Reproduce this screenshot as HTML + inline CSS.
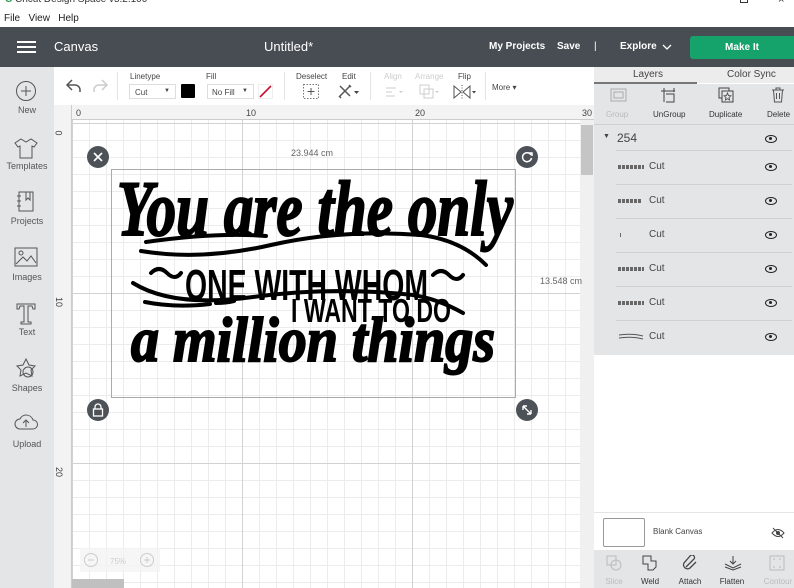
<!DOCTYPE html>
<html><head><meta charset="utf-8"><style>
*{box-sizing:border-box;margin:0;padding:0}
body{width:794px;height:588px;overflow:hidden;font-family:"Liberation Sans",sans-serif;background:#fff;position:relative;color:#333}
.a{position:absolute}
.side div{position:absolute;left:0;width:54px;text-align:center;font-size:9px;color:#555}
.tl{font-size:8px;color:#444}
.lab{font-size:9px;color:#444}
.row{position:absolute;left:616px;width:176px;height:34px;border-top:1px solid #cfd0d2}
.row .t{position:absolute;left:33px;top:10px;font-size:10px;color:#444}
.row .th{position:absolute;left:2px;top:14px;width:26px;height:4px;background:repeating-linear-gradient(90deg,#333 0 3px,transparent 3px 4px);opacity:.7}
.eye{position:absolute;width:12px;height:8px;border:1.5px solid #222;border-radius:50%/50%}
.eye:after{content:"";position:absolute;left:3px;top:1px;width:3px;height:3px;background:#222;border-radius:50%}
.bt{position:absolute;top:577px;font-size:8px;color:#333;width:40px;text-align:center}
</style></head><body>
<div class="a" style="left:0;top:0;width:794px;height:10px;background:#fff;overflow:hidden">
<div class="a" style="left:5px;top:-6px;font-size:10px;color:#333"><span style="color:#2c9c4c;font-weight:bold">C</span> Cricut Design Space v5.2.100</div>
<div class="a" style="left:740px;top:-4px;width:8px;height:7px;border:1px solid #333"></div>
<div class="a" style="left:778px;top:-6px;font-size:11px">×</div>
</div>
<div class="a" style="left:4px;top:13px;font-size:10px;color:#222">File&nbsp;&nbsp; View&nbsp;&nbsp; Help</div>
<div class="a" style="left:0;top:27px;width:794px;height:40px;background:#474d53"></div>
<div class="a" style="left:17px;top:41px;width:19px;height:2px;background:#fff;box-shadow:0 5px 0 #fff,0 10px 0 #fff"></div>
<div class="a" style="left:54px;top:39px;font-size:13px;color:#fff">Canvas</div>
<div class="a" style="left:264px;top:39px;font-size:13px;color:#fff">Untitled*</div>
<div class="a" style="left:489px;top:41px;font-size:10px;color:#fff;font-weight:bold">My Projects</div>
<div class="a" style="left:557px;top:41px;font-size:10px;color:#fff;font-weight:bold">Save</div>
<div class="a" style="left:594px;top:41px;font-size:10px;color:#fff">|</div>
<div class="a" style="left:620px;top:41px;font-size:10px;color:#fff;font-weight:bold">Explore</div>
<svg class="a" style="left:662px;top:44px" width="10" height="6"><path d="M1 1l4 4 4-4" stroke="#fff" fill="none" stroke-width="1.3"/></svg>
<div class="a" style="left:690px;top:36px;width:104px;height:23px;background:#15a26b;border-radius:3px 0 0 3px;color:#fff;font-size:10px;font-weight:bold;text-align:center;line-height:23px">Make It</div>
<div class="a side" style="left:0;top:67px;width:54px;height:521px;background:#e4e5e7">
<svg class="a" style="left:15px;top:13px" width="22" height="22"><circle cx="11" cy="11" r="9.5" stroke="#555" fill="none"/><path d="M11 6v10M6 11h10" stroke="#555"/></svg>
<div style="top:38px">New</div>
<svg class="a" style="left:13px;top:70px" width="26" height="22"><path d="M8 2l5 3 5-3 6 4-3 4-2-1v12H7V9l-2 1-3-4z" stroke="#555" fill="none"/></svg>
<div style="top:94px">Templates</div>
<svg class="a" style="left:16px;top:124px" width="20" height="22"><rect x="3" y="1" width="14" height="19" stroke="#555" fill="none"/><path d="M10 1v8l2-2 2 2V1M1 5h4M1 10h4M1 15h4" stroke="#555" fill="none"/></svg>
<div style="top:149px">Projects</div>
<svg class="a" style="left:14px;top:180px" width="24" height="20"><rect x="1" y="1" width="22" height="18" stroke="#555" fill="none"/><circle cx="7" cy="6" r="2" stroke="#555" fill="none"/><path d="M2 17l7-7 4 4 4-5 5 7" stroke="#555" fill="none"/></svg>
<div style="top:205px">Images</div>
<svg class="a" style="left:16px;top:236px" width="20" height="22"><path d="M1 1h18v5h-2l-1-3h-4v16h3v2H5v-2h3V3H4L3 6H1z" stroke="#555" fill="none"/></svg>
<div style="top:260px">Text</div>
<svg class="a" style="left:15px;top:291px" width="22" height="22"><path d="M11 1l3 6 6 1-4 4 1 6-6-3-6 3 1-6-4-4 6-1z" stroke="#555" fill="none"/><circle cx="13" cy="14" r="5" stroke="#555" fill="none"/></svg>
<div style="top:316px">Shapes</div>
<svg class="a" style="left:14px;top:346px" width="24" height="18"><path d="M6 16a5 5 0 010-10 7 7 0 0113 1 4.5 4.5 0 010 9z" stroke="#555" fill="none"/><path d="M12 14V8M9 10l3-3 3 3" stroke="#555" fill="none"/></svg>
<div style="top:372px">Upload</div>
</div>
<div class="a" style="left:54px;top:67px;width:540px;height:38px;background:#fff"></div>
<svg class="a" style="left:64px;top:77px" width="46" height="18"><path d="M8 3L3 8l5 5M3 8h8a5 5 0 015 5v2" stroke="#555" fill="none" stroke-width="1.5"/><path d="M38 3l5 5-5 5M43 8h-8a5 5 0 00-5 5v2" stroke="#ccc" fill="none" stroke-width="1.5"/></svg>
<div class="a" style="left:117px;top:72px;width:1px;height:28px;background:#e4e4e4"></div>
<div class="a tl" style="left:130px;top:72px">Linetype</div>
<div class="a" style="left:129px;top:84px;width:47px;height:15px;border:1px solid #ddd;font-size:8px;color:#444;padding:3px 5px">Cut<span style="position:absolute;right:5px;font-size:6px">▼</span></div>
<div class="a" style="left:181px;top:84px;width:14px;height:14px;background:#000;border-radius:1px"></div>
<div class="a tl" style="left:206px;top:72px">Fill</div>
<div class="a" style="left:207px;top:84px;width:47px;height:15px;border:1px solid #ddd;font-size:8px;color:#444;padding:3px 4px">No Fill<span style="position:absolute;right:5px;font-size:6px">▼</span></div>
<svg class="a" style="left:258px;top:84px" width="15" height="15"><rect x=".5" y=".5" width="14" height="14" fill="none" stroke="#eee"/><path d="M2 13L13 2" stroke="#c8102e" stroke-width="1.6"/></svg>
<div class="a" style="left:284px;top:72px;width:1px;height:28px;background:#e4e4e4"></div>
<div class="a tl" style="left:296px;top:72px">Deselect</div>
<svg class="a" style="left:303px;top:84px" width="16" height="15"><rect x=".5" y=".5" width="15" height="14" fill="none" stroke="#777" stroke-dasharray="1.5 1.5"/><path d="M8 4v7M4.5 7.5h7" stroke="#555"/></svg>
<div class="a tl" style="left:342px;top:72px">Edit</div>
<svg class="a" style="left:338px;top:84px" width="22" height="15"><path d="M2 2l10 10M12 2L2 12M1 12l2 2M11 1l2 2" stroke="#555" fill="none" stroke-width="1.5"/><path d="M16 7h5l-2.5 3z" fill="#444"/></svg>
<div class="a" style="left:370px;top:72px;width:1px;height:28px;background:#e4e4e4"></div>
<div class="a tl" style="left:384px;top:72px;color:#ccc">Align</div>
<svg class="a" style="left:385px;top:86px" width="20" height="12"><path d="M1 2h10M1 6h6M1 10h9" stroke="#ccc"/><path d="M14 5h4l-2 2z" fill="#ccc"/></svg>
<div class="a tl" style="left:415px;top:72px;color:#ccc">Arrange</div>
<svg class="a" style="left:419px;top:84px" width="22" height="16"><rect x="1" y="1" width="9" height="9" fill="none" stroke="#ccc"/><rect x="5" y="5" width="9" height="9" fill="none" stroke="#ccc"/><path d="M16 7h4l-2 2z" fill="#ccc"/></svg>
<div class="a tl" style="left:458px;top:72px">Flip</div>
<svg class="a" style="left:453px;top:85px" width="24" height="14"><path d="M1 1l7 6-7 6zM17 1l-7 6 7 6z" fill="none" stroke="#555"/><path d="M9 0v14" stroke="#555" stroke-dasharray="1 1.5"/><path d="M19 6h4l-2 2.5z" fill="#444"/></svg>
<div class="a" style="left:485px;top:72px;width:1px;height:28px;background:#e4e4e4"></div>
<div class="a tl" style="left:492px;top:83px">More ▾</div>
<div class="a" style="left:54px;top:105px;width:540px;height:15px;background:#f3f3f4;border-bottom:1px solid #ccc"></div>
<div class="a" style="left:54px;top:105px;width:18px;height:483px;background:#f3f3f4;border-right:1px solid #ccc"></div>
<div class="a lab" style="left:76px;top:108px">0</div>
<div class="a lab" style="left:246px;top:108px">10</div>
<div class="a lab" style="left:415px;top:108px">20</div>
<div class="a lab" style="left:582px;top:108px">30</div>
<div class="a lab" style="left:56px;top:128px;transform:rotate(90deg)">0</div>
<div class="a lab" style="left:54px;top:297px;transform:rotate(90deg)">10</div>
<div class="a lab" style="left:54px;top:467px;transform:rotate(90deg)">20</div>
<div class="a" style="left:72px;top:120px;width:508px;height:468px;background-color:#fff;
background-image:linear-gradient(90deg,#d2d2d2 1px,transparent 1px),linear-gradient(#d2d2d2 1px,transparent 1px),linear-gradient(90deg,#ececec 1px,transparent 1px),linear-gradient(#ececec 1px,transparent 1px);
background-size:170px 170px,170px 170px,17px 17px,17px 17px;background-position:0 3px,0 3px,0 3px,0 3px"></div>
<div class="a" style="left:580px;top:120px;width:14px;height:468px;background:#f0f0f0"></div>
<div class="a" style="left:581px;top:125px;width:12px;height:50px;background:#c5c5c5"></div>
<div class="a" style="left:72px;top:579px;width:52px;height:9px;background:#c0c0c0"></div>
<div class="a" style="left:80px;top:548px;width:80px;height:24px;background:#f4f4f4;opacity:.8"></div>
<svg class="a" style="left:84px;top:552px" width="72" height="16"><circle cx="7" cy="8" r="6.5" stroke="#ccc" fill="none"/><path d="M4 8h6" stroke="#ccc"/><circle cx="63" cy="8" r="6.5" stroke="#ccc" fill="none"/><path d="M60 8h6M63 5v6" stroke="#ccc"/><text x="26" y="12" font-size="8" fill="#ccc" font-family="Liberation Sans">75%</text></svg>
<div class="a" style="left:111px;top:169px;width:405px;height:229px;border:1.5px solid #aaa"></div>
<div class="a" style="left:291px;top:148px;font-size:9px;color:#666">23.944 cm</div>
<div class="a" style="left:540px;top:276px;font-size:9px;color:#666">13.548 cm</div>
<svg class="a" style="left:87px;top:146px" width="22" height="22"><circle cx="11" cy="11" r="11" fill="#4c5258"/><path d="M7 7l8 8M15 7l-8 8" stroke="#fff" stroke-width="1.6"/></svg>
<svg class="a" style="left:516px;top:146px" width="22" height="22"><circle cx="11" cy="11" r="11" fill="#4c5258"/><path d="M15 9a4.5 4.5 0 10.5 3" stroke="#fff" stroke-width="1.5" fill="none"/><path d="M13 7h3v3" stroke="#fff" stroke-width="1.5" fill="none"/></svg>
<svg class="a" style="left:87px;top:399px" width="22" height="22"><circle cx="11" cy="11" r="11" fill="#4c5258"/><rect x="6.5" y="10" width="9" height="7" fill="none" stroke="#fff" stroke-width="1.3"/><path d="M8 10V8a3 3 0 016 0v2" stroke="#fff" stroke-width="1.3" fill="none"/></svg>
<svg class="a" style="left:516px;top:399px" width="22" height="22"><circle cx="11" cy="11" r="11" fill="#4c5258"/><path d="M7 7l8 8M7 7h4M7 7v4M15 15h-4M15 15v-4" stroke="#fff" stroke-width="1.4" fill="none"/></svg>
<svg class="a" style="left:111px;top:169px" width="405" height="229">
<g font-family="Liberation Serif" font-weight="bold" font-style="italic" fill="#000">
<text x="6" y="66" font-size="78" textLength="396" lengthAdjust="spacingAndGlyphs" stroke="#000" stroke-width="2">You are the only</text>
<text x="74" y="131" font-size="44" font-style="normal" font-family="Liberation Sans" textLength="243" lengthAdjust="spacingAndGlyphs">ONE WITH WHOM</text>
<text x="180" y="153" font-size="33" font-style="normal" font-family="Liberation Sans" textLength="160" lengthAdjust="spacingAndGlyphs">I WANT TO DO</text>
<text x="20" y="192" font-size="64" textLength="364" lengthAdjust="spacingAndGlyphs" stroke="#000" stroke-width="2">a million things</text>
</g>
<g fill="none" stroke="#000" stroke-width="4" stroke-linecap="round">
<path d="M35 73q70-10 120-6"/><path d="M30 82q60 10 130-6t150-10q40 5 65 30"/>
<path d="M40 104q8-8 16 0t14 0"/><path d="M322 106q8-8 16 0t14 0"/>
<path d="M22 114q40 25 120 14t160-2q25 4 50 18"/>
<path d="M34 133q30 6 65 2"/><path d="M105 134q10 0 18-2"/>
</g>
</svg>
<div class="a" style="left:594px;top:67px;width:200px;height:521px;background:#fff"></div>
<div class="a" style="left:594px;top:67px;width:200px;height:16px;background:#ececed"></div>
<div class="a" style="left:633px;top:69px;font-size:10px;color:#444">Layers</div>
<div class="a" style="left:727px;top:69px;font-size:10px;color:#444">Color Sync</div>
<div class="a" style="left:594px;top:82px;width:103px;height:2px;background:#777"></div>
<div class="a" style="left:594px;top:84px;width:200px;height:271px;background:#e4e5e7"></div>
<svg class="a" style="left:610px;top:88px" width="18" height="15"><rect x="1" y="1" width="15" height="12" fill="none" stroke="#aaa"/><rect x="4" y="4" width="9" height="6" fill="none" stroke="#aaa"/></svg>
<svg class="a" style="left:660px;top:87px" width="18" height="16"><path d="M4 1v14M1 4h14M14 1v4M6 7h8v8H6" fill="none" stroke="#444"/></svg>
<svg class="a" style="left:718px;top:87px" width="16" height="16"><rect x="1" y="1" width="10" height="10" fill="none" stroke="#444"/><rect x="4" y="4" width="11" height="11" fill="#e4e5e7" stroke="#444"/><path d="M9.5 6l1 2.5 2.5.3-2 1.7.6 2.5-2.1-1.3-2.1 1.3.6-2.5-2-1.7 2.5-.3z" fill="none" stroke="#444" stroke-width=".8"/></svg>
<svg class="a" style="left:771px;top:87px" width="14" height="16"><path d="M1 3h12M5 3V1h4v2M2.5 3l1 12h7l1-12M5.5 6v6M8.5 6v6" fill="none" stroke="#555"/></svg>
<div class="a" style="left:606px;top:110px;font-size:8px;color:#bbb">Group</div>
<div class="a" style="left:653px;top:110px;font-size:8px;color:#333">UnGroup</div>
<div class="a" style="left:709px;top:110px;font-size:8px;color:#333">Duplicate</div>
<div class="a" style="left:767px;top:110px;font-size:8px;color:#333">Delete</div>
<div class="a" style="left:594px;top:124px;width:200px;height:1px;background:#d0d0d0"></div>
<div class="a" style="left:603px;top:133px;font-size:7px;color:#444">▼</div>
<div class="a" style="left:617px;top:131px;font-size:12px;color:#444">254</div>
<div class="eye" style="left:765px;top:135px"></div>
<div class="row" style="top:150px"><div class="th"></div><div class="t">Cut</div><div class="eye" style="left:149px;top:12px"></div></div>
<div class="row" style="top:184px"><div class="th" style="width:24px"></div><div class="t">Cut</div><div class="eye" style="left:149px;top:12px"></div></div>
<div class="row" style="top:218px"><div class="th" style="width:1px;left:4px"></div><div class="t">Cut</div><div class="eye" style="left:149px;top:12px"></div></div>
<div class="row" style="top:252px"><div class="th"></div><div class="t">Cut</div><div class="eye" style="left:149px;top:12px"></div></div>
<div class="row" style="top:286px"><div class="th"></div><div class="t">Cut</div><div class="eye" style="left:149px;top:12px"></div></div>
<div class="row" style="top:320px"><svg style="position:absolute;left:2px;top:12px" width="26" height="8"><path d="M1 2q12-2 24 1M1 5q12-2 24 1" stroke="#555" fill="none"/></svg><div class="t">Cut</div><div class="eye" style="left:149px;top:12px"></div></div>
<div class="a" style="left:594px;top:512px;width:200px;height:1px;background:#e4e4e4"></div>
<div class="a" style="left:603px;top:518px;width:42px;height:29px;border:1px solid #999;border-radius:2px;background:#fff"></div>
<div class="a" style="left:653px;top:527px;font-size:8px;color:#444">Blank Canvas</div>
<svg class="a" style="left:771px;top:527px" width="14" height="12"><path d="M1 6q6-7 12 0q-6 7-12 0z" fill="none" stroke="#444"/><circle cx="7" cy="6" r="2" fill="#444"/><path d="M2 1l10 10" stroke="#444"/></svg>
<div class="a" style="left:594px;top:550px;width:200px;height:38px;background:#e4e5e7"></div>
<svg class="a" style="left:606px;top:555px" width="16" height="16"><rect x="1" y="1" width="9" height="9" fill="none" stroke="#bbb"/><circle cx="10" cy="10" r="5" fill="none" stroke="#bbb"/></svg>
<svg class="a" style="left:642px;top:555px" width="16" height="16"><path d="M1 1h8v5h5v6l-3 3H6V9H1z" fill="none" stroke="#444"/></svg>
<svg class="a" style="left:682px;top:555px" width="16" height="16"><path d="M4 12L12 4a2.5 2.5 0 00-4-3L2 8a4 4 0 006 5l6-6" fill="none" stroke="#444" stroke-width="1.3"/></svg>
<svg class="a" style="left:724px;top:555px" width="18" height="16"><path d="M1 9l8 4 8-4M9 1v8M6 6l3 3 3-3" fill="none" stroke="#444"/><path d="M1 12l8 3 8-3" fill="none" stroke="#444"/></svg>
<svg class="a" style="left:769px;top:555px" width="16" height="16"><rect x="1" y="1" width="14" height="14" fill="none" stroke="#bbb"/><path d="M4 4h2M10 4h2M4 12h2M10 12h2" stroke="#bbb"/></svg>
<div class="bt" style="left:594px;color:#bbb">Slice</div>
<div class="bt" style="left:630px">Weld</div>
<div class="bt" style="left:670px">Attach</div>
<div class="bt" style="left:712px">Flatten</div>
<div class="bt" style="left:758px;color:#bbb">Contour</div>
</body></html>
